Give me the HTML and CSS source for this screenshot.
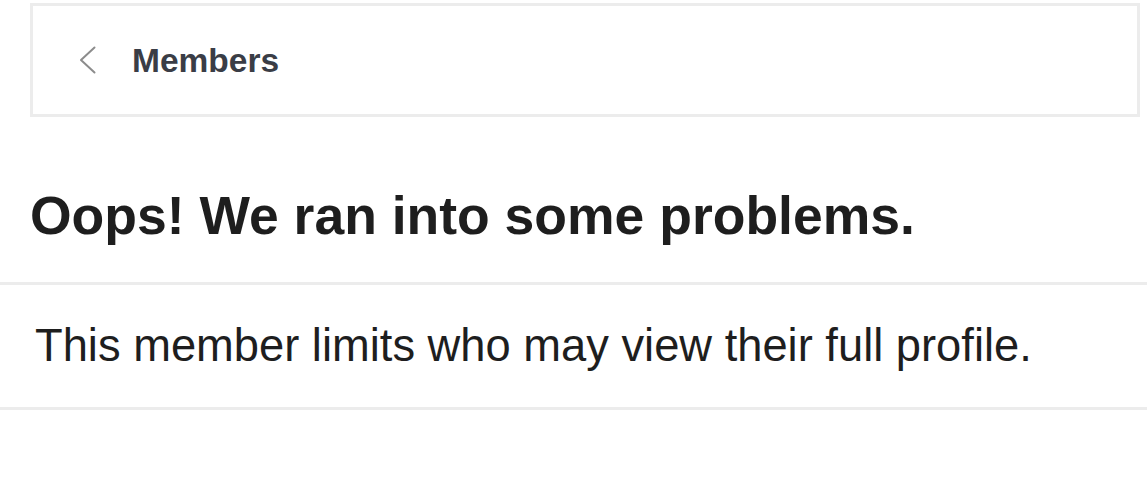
FILE: index.html
```html
<!DOCTYPE html>
<html lang="en">
<head>
<meta charset="utf-8">
<title>Members</title>
<link rel="stylesheet" href="styles.css">
</head>
<body>
  <header class="topbar">
    <a class="back" href="#" aria-label="Back">
      <svg class="chev" width="18" height="30" viewBox="0 0 18 30" aria-hidden="true">
        <polyline points="15.5,2.5 2,15 15.5,27.5" fill="none" stroke="#8c8c8c" stroke-width="2" stroke-linecap="round" stroke-linejoin="round"/>
      </svg>
    </a>
    <span class="title">Members</span>
  </header>
  <h1 class="heading">Oops! We ran into some problems.</h1>
  <p class="message">This member limits who may view their full profile.</p>
</body>
</html>
```
FILE: styles.css
```css
html, body {
  margin: 0;
  padding: 0;
  background: #ffffff;
}
body {
  font-family: "Liberation Sans", Arial, Helvetica, sans-serif;
  color: #222222;
}
.topbar {
  box-sizing: border-box;
  height: 114px;
  margin: 3px 7px 0 30px;
  border: 3px solid #ececec;
  display: flex;
  align-items: center;
  padding-left: 46px;
}
.back {
  display: flex;
  align-items: center;
}
.chev {
  display: block;
}
.title {
  margin-left: 35px;
  font-size: 33.5px;
  font-weight: 700;
  color: #3a3d46;
  line-height: 1;
  padding-top: 1px;
}
.heading {
  margin: 0;
  padding: 68px 0 36px 30px;
  font-size: 53.5px;
  line-height: 61px;
  font-weight: 700;
  color: #1e1e1e;
  border-bottom: 3px solid #ececec;
}
.message {
  margin: 0;
  padding: 35px 0 35px 35px;
  font-size: 45.3px;
  line-height: 52px;
  color: #1e1e1e;
  border-bottom: 3px solid #ececec;
}
```
